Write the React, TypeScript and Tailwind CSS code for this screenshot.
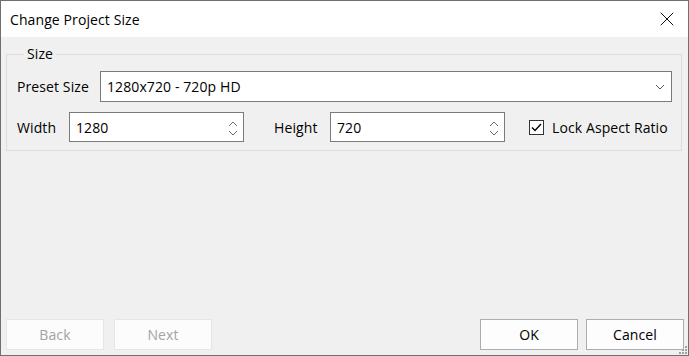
import { X } from 'lucide-react'

function Spinner() {
  return (
    <svg width="10" height="20" viewBox="0 0 10 20" className="shrink-0">
      <path d="M1 9 L5 5 L9 9" fill="none" stroke="#6d6d6d" strokeWidth="1" />
      <path d="M1 14 L5 18 L9 14" fill="none" stroke="#6d6d6d" strokeWidth="1" />
    </svg>
  )
}

function NumberBox({ value, className }: { value: string; className?: string }) {
  return (
    <div className={`h-[30px] w-[175px] bg-white border border-[#7a7a7a] flex items-center pl-[6px] pr-[5px] ${className ?? ''}`}>
      <span className="flex-1">{value}</span>
      <Spinner />
    </div>
  )
}

function Button({ label, disabled }: { label: string; disabled?: boolean }) {
  return (
    <button
      className={`h-[31px] w-[98px] flex items-center justify-center ${
        disabled
          ? 'bg-[#fcfcfc] border border-[#e6e6e6] text-[#a3a3a3]'
          : 'bg-[#fdfdfd] border border-[#adadad] text-black'
      }`}
    >
      {label}
    </button>
  )
}

export default function App() {
  return (
    <div
      className="w-[689px] h-[356px] border border-[#6f6f6f] flex flex-col bg-[#f0f0f0] text-[14px] tracking-[0.1px] text-black relative"
      style={{ fontFamily: '"Open Sans", "Noto Sans", sans-serif' }}
    >
      {/* Title bar */}
      <div className="h-[36px] bg-white flex items-center justify-between pl-[9px] pr-[9px] shrink-0">
        <span>Change Project Size</span>
        <X size={24} strokeWidth={1} color="#111" />
      </div>

      {/* Size group */}
      <fieldset className="mt-[7px] ml-[5px] mr-[6px] border border-[#dcdcdc] pl-[10px] pr-[9px] pb-[8px]">
        <legend className="ml-[7px] px-[3px] leading-[20px]">Size</legend>
        <div className="flex items-center mt-[7px]">
          <span className="w-[83px]">Preset Size</span>
          <div className="flex-1 h-[31px] bg-white border border-[#7a7a7a] flex items-center pl-[6px] pr-[6px]">
            <span className="flex-1">1280x720 - 720p HD</span>
            <svg width="10" height="6" viewBox="0 0 10 6">
              <path d="M1 1 L5 5 L9 1" fill="none" stroke="#5a5a5a" strokeWidth="1" />
            </svg>
          </div>
        </div>
        <div className="flex items-center mt-[10px]">
          <span className="w-[52px]">Width</span>
          <NumberBox value="1280" />
          <span className="w-[56px] ml-[30px]">Height</span>
          <NumberBox value="720" />
          <div className="ml-[24px] flex items-center">
            <div className="w-[15px] h-[15px] border border-[#333] bg-white flex items-center justify-center">
              <svg width="11" height="9" viewBox="0 0 11 9">
                <path d="M1 4.5 L4 7.5 L10 1" fill="none" stroke="#000" strokeWidth="1.4" />
              </svg>
            </div>
            <span className="ml-[8px]">Lock Aspect Ratio</span>
          </div>
        </div>
      </fieldset>

      {/* Buttons */}
      <div className="mt-auto mb-[5px] flex items-center pl-[5px] pr-[4px]">
        <Button label="Back" disabled />
        <div className="ml-[10px]">
          <Button label="Next" disabled />
        </div>
        <div className="ml-auto">
          <Button label="OK" />
        </div>
        <div className="ml-[8px]">
          <Button label="Cancel" />
        </div>
      </div>

      {/* Resize grip */}
      <svg width="8" height="8" viewBox="0 0 8 8" className="absolute right-[1px] bottom-[1px]">
        {[
          [6, 0], [6, 3], [3, 3], [6, 6], [3, 6], [0, 6],
        ].map(([x, y], i) => (
          <rect key={i} x={x} y={y} width="2" height="2" fill="#a0a0a0" />
        ))}
      </svg>
    </div>
  )
}
